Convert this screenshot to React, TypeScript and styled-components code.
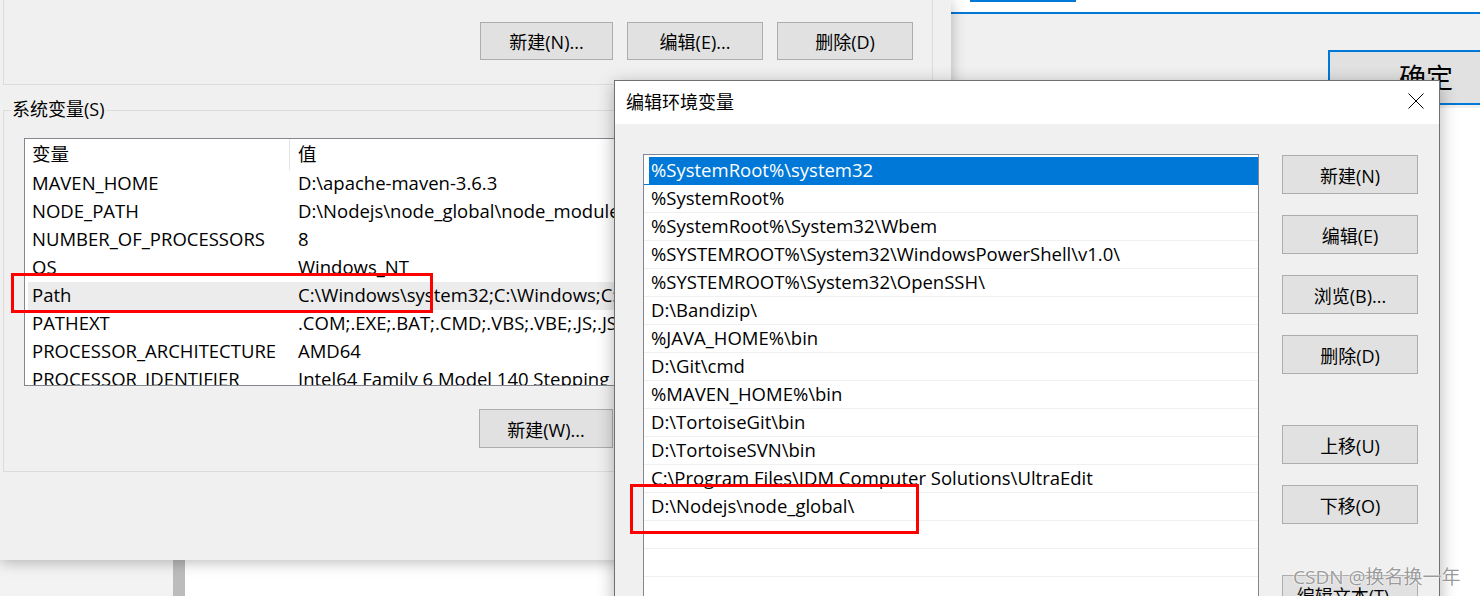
import styled, { createGlobalStyle } from 'styled-components'

const FONT = `"Open Sans", "Noto Sans CJK SC", sans-serif`

const GlobalStyle = createGlobalStyle`
  html, body {
    margin: 0;
    padding: 0;
  }
  body {
    width: 1480px;
    height: 596px;
    overflow: hidden;
    background: #ffffff;
    font-family: ${FONT};
    color: #000;
  }
`

const Desktop = styled.div`
  position: relative;
  width: 1480px;
  height: 596px;
  overflow: hidden;
  background: #ffffff;
`

/* ---------- windows behind ---------- */

const BackStrip = styled.div`
  position: absolute;
  left: 0;
  top: 540px;
  width: 615px;
  height: 56px;
  display: flex;
`

const StripPane = styled.div<{ $bg: string; $w?: number }>`
  background: ${(p) => p.$bg};
  width: ${(p) => (p.$w ? `${p.$w}px` : 'auto')};
  flex: ${(p) => (p.$w ? 'none' : '1')};
`

const BackWindow = styled.div`
  position: absolute;
  left: 940px;
  top: 0;
  width: 540px;
  height: 596px;
  background: #ffffff;
  display: flex;
  flex-direction: column;
`

const TopStrip = styled.div`
  height: 12px;
  background: #ffffff;
  border-bottom: 2px solid #0078d7;
`

const FieldEdge = styled.div`
  margin-left: 30px;
  width: 106px;
  height: 0;
  border-bottom: 2px solid #0078d7;
`

const GreyPanel = styled.div`
  height: 94px;
  box-sizing: border-box;
  background: #f0f0f0;
  padding: 36px 0 0 388px;
  overflow: hidden;
`

const OkButton = styled.div`
  width: 196px;
  height: 55px;
  box-sizing: border-box;
  border: 2px solid #0078d7;
  background: #e1e1e1;
  display: flex;
  align-items: center;
  justify-content: center;
  font-size: 27px;
  padding-bottom: 2px;
`

/* ---------- system properties dialog ---------- */

const LeftDialog = styled.div`
  position: absolute;
  left: 0;
  top: 0;
  width: 951px;
  height: 560px;
  box-sizing: border-box;
  padding-left: 3px;
  background: #f0f0f0;
  box-shadow: 0 2px 14px rgba(0, 0, 0, 0.28);
  display: flex;
  flex-direction: column;
`

const TopGroup = styled.div`
  width: 930px;
  height: 85px;
  box-sizing: border-box;
  border: 1px solid #dcdcdc;
  border-top: none;
  padding: 22px 19px 0 0;
`

const ButtonRow = styled.div`
  display: flex;
  justify-content: flex-end;
  gap: 14px;
`

const WinButton = styled.div<{ $w: number; $h?: number }>`
  width: ${(p) => p.$w}px;
  height: ${(p) => p.$h ?? 38}px;
  box-sizing: border-box;
  flex: none;
  background: #e1e1e1;
  border: 1px solid #adadad;
  display: flex;
  align-items: center;
  justify-content: center;
  font-size: 18px;
  white-space: nowrap;
`

const SysGroup = styled.div`
  margin-top: 25px;
  width: 930px;
  height: 362px;
  box-sizing: border-box;
  border: 1px solid #dcdcdc;
  padding: 0 19px 0 20px;
  display: flex;
  flex-direction: column;
`

const Legend = styled.div`
  align-self: flex-start;
  margin: -14px 0 0 -13px;
  padding: 0 1px;
  background: #f0f0f0;
  font-size: 18px;
  line-height: 24px;
`

const VarList = styled.div`
  margin-top: 17px;
  width: 888px;
  height: 248px;
  box-sizing: border-box;
  border: 1px solid #828790;
  background: #ffffff;
  overflow: hidden;
  padding: 0 3px;
`

const VarRow = styled.div<{ $head?: boolean; $hot?: boolean }>`
  display: grid;
  grid-template-columns: 266px 1fr;
  height: ${(p) => (p.$head ? 31 : 28)}px;
  align-items: center;
  background: ${(p) => (p.$hot ? '#ececec' : 'transparent')};
  font-size: 18.5px;
  white-space: nowrap;
`

const VarCell = styled.div<{ $divider?: boolean }>`
  padding: 0 0 3px 4px;
  overflow: hidden;
  height: 100%;
  display: flex;
  align-items: center;
  box-sizing: border-box;
  border-right: ${(p) => (p.$divider ? '1px solid #e5e5e5' : 'none')};
  margin-right: ${(p) => (p.$divider ? '4px' : '0')};
`

const LowerButtons = styled(ButtonRow)`
  margin-top: 23px;
`

/* ---------- edit environment variable dialog ---------- */

const EditDialog = styled.div`
  position: absolute;
  left: 614px;
  top: 80px;
  width: 826px;
  height: 560px;
  box-sizing: border-box;
  border: 1px solid #707070;
  background: #f0f0f0;
  box-shadow: 0 4px 16px rgba(0, 0, 0, 0.3);
  display: flex;
  flex-direction: column;
`

const TitleBar = styled.div`
  height: 43px;
  flex: none;
  box-sizing: border-box;
  background: #ffffff;
  display: flex;
  align-items: center;
  justify-content: space-between;
  padding: 0 15px 3px 11px;
  font-size: 18px;
`

const Body = styled.div`
  flex: 1;
  display: flex;
  gap: 23px;
  padding: 30px 21px 0 28px;
  min-height: 0;
`

const PathList = styled.div`
  width: 616px;
  flex: none;
  box-sizing: border-box;
  border: 1px solid #828790;
  background: #ffffff;
  padding-top: 2px;
  overflow: hidden;
`

const PathRow = styled.div<{ $selected?: boolean }>`
  height: 28px;
  box-sizing: border-box;
  padding: 0 0 2px 7px;
  border-bottom: 1px solid ${(p) => (p.$selected ? '#0078d7' : '#f0f0f0')};
  background: ${(p) =>
    p.$selected ? 'linear-gradient(to right, transparent 5px, #0078d7 5px)' : 'transparent'};
  color: ${(p) => (p.$selected ? '#ffffff' : '#000')};
  display: flex;
  align-items: center;
  font-size: 18.5px;
  white-space: nowrap;
`

const SideButtons = styled.div`
  display: flex;
  flex-direction: column;
  gap: 21px;
  padding-top: 1px;
`

const Spacer = styled.div`
  height: 9px;
  flex: none;
`

/* ---------- annotations ---------- */

const RedBox = styled.div<{ $x: number; $y: number; $w: number; $h: number }>`
  position: absolute;
  left: ${(p) => p.$x}px;
  top: ${(p) => p.$y}px;
  width: ${(p) => p.$w}px;
  height: ${(p) => p.$h}px;
  box-sizing: border-box;
  border: 3px solid #ff0000;
`

const Watermark = styled.div`
  position: absolute;
  left: 1293px;
  top: 563px;
  font-size: 19px;
  line-height: 28px;
  color: rgba(110, 110, 110, 0.7);
  text-shadow: 0 0 2px #ffffff, 0 0 1px #ffffff;
  white-space: nowrap;
`

const vars: [string, string][] = [
  ['MAVEN_HOME', 'D:\\apache-maven-3.6.3'],
  ['NODE_PATH', 'D:\\Nodejs\\node_global\\node_modules'],
  ['NUMBER_OF_PROCESSORS', '8'],
  ['OS', 'Windows_NT'],
  ['Path', 'C:\\Windows\\system32;C:\\Windows;C:\\Windows\\System32\\Wbem;C:\\Windows\\System32\\WindowsPowerShell\\v1.0\\'],
  ['PATHEXT', '.COM;.EXE;.BAT;.CMD;.VBS;.VBE;.JS;.JSE;.WSF;.WSH;.MSC'],
  ['PROCESSOR_ARCHITECTURE', 'AMD64'],
  ['PROCESSOR_IDENTIFIER', 'Intel64 Family 6 Model 140 Stepping 1, GenuineIntel'],
]

const paths = [
  '%SystemRoot%\\system32',
  '%SystemRoot%',
  '%SystemRoot%\\System32\\Wbem',
  '%SYSTEMROOT%\\System32\\WindowsPowerShell\\v1.0\\',
  '%SYSTEMROOT%\\System32\\OpenSSH\\',
  'D:\\Bandizip\\',
  '%JAVA_HOME%\\bin',
  'D:\\Git\\cmd',
  '%MAVEN_HOME%\\bin',
  'D:\\TortoiseGit\\bin',
  'D:\\TortoiseSVN\\bin',
  'C:\\Program Files\\IDM Computer Solutions\\UltraEdit',
  'D:\\Nodejs\\node_global\\',
  '',
  '',
  '',
]

function CloseIcon() {
  return (
    <svg width="16" height="16" viewBox="0 0 16 16">
      <path d="M0.5 0.5 L15.5 15.5 M15.5 0.5 L0.5 15.5" stroke="#000" strokeWidth="1" fill="none" />
    </svg>
  )
}

export default function App() {
  return (
    <Desktop>
      <GlobalStyle />

      <BackStrip>
        <StripPane $bg="#f3f3f3" $w={173} />
        <StripPane $bg="#bcbcbc" $w={12} />
        <StripPane $bg="#ffffff" />
      </BackStrip>

      <BackWindow>
        <TopStrip>
          <FieldEdge />
        </TopStrip>
        <GreyPanel>
          <OkButton>确定</OkButton>
        </GreyPanel>
      </BackWindow>

      <LeftDialog>
        <TopGroup>
          <ButtonRow>
            <WinButton $w={133}>新建(N)...</WinButton>
            <WinButton $w={136}>编辑(E)...</WinButton>
            <WinButton $w={136}>删除(D)</WinButton>
          </ButtonRow>
        </TopGroup>

        <SysGroup>
          <Legend>系统变量(S)</Legend>
          <VarList>
            <VarRow $head>
              <VarCell $divider>变量</VarCell>
              <VarCell>值</VarCell>
            </VarRow>
            {vars.map(([name, value]) => (
              <VarRow key={name} $hot={name === 'Path'}>
                <VarCell>{name}</VarCell>
                <VarCell>{value}</VarCell>
              </VarRow>
            ))}
          </VarList>
          <LowerButtons>
            <WinButton $w={134} $h={39}>新建(W)...</WinButton>
            <WinButton $w={136} $h={39}>编辑(I)...</WinButton>
            <WinButton $w={136} $h={39}>删除(L)</WinButton>
          </LowerButtons>
        </SysGroup>
      </LeftDialog>

      <EditDialog>
        <TitleBar>
          <span>编辑环境变量</span>
          <CloseIcon />
        </TitleBar>
        <Body>
          <PathList>
            {paths.map((p, i) => (
              <PathRow key={i} $selected={i === 0}>
                {p}
              </PathRow>
            ))}
          </PathList>
          <SideButtons>
            <WinButton $w={136} $h={39}>新建(N)</WinButton>
            <WinButton $w={136} $h={39}>编辑(E)</WinButton>
            <WinButton $w={136} $h={39}>浏览(B)...</WinButton>
            <WinButton $w={136} $h={39}>删除(D)</WinButton>
            <Spacer />
            <WinButton $w={136} $h={39}>上移(U)</WinButton>
            <WinButton $w={136} $h={39}>下移(O)</WinButton>
            <Spacer />
            <WinButton $w={136} $h={39}>编辑文本(T)...</WinButton>
          </SideButtons>
        </Body>
      </EditDialog>

      <RedBox $x={11} $y={273} $w={422} $h={40} />
      <RedBox $x={630} $y={484} $w={289} $h={50} />

      <Watermark>CSDN @换名换一年</Watermark>
    </Desktop>
  )
}
